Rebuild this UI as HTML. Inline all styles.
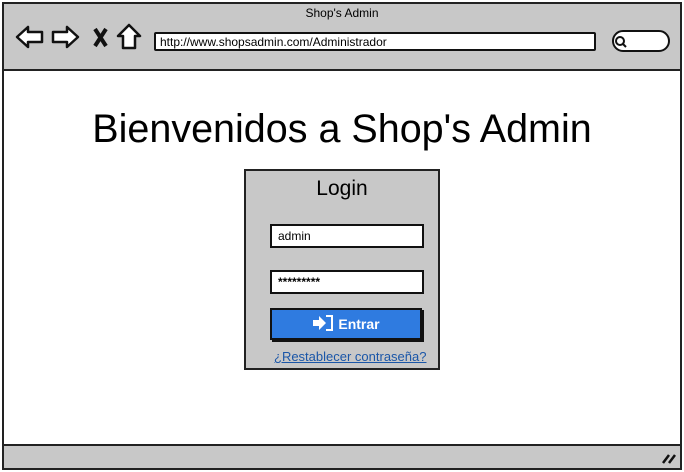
<!DOCTYPE html>
<html><head><style>
*{margin:0;padding:0;box-sizing:border-box}
body{width:684px;height:472px;background:#fff;position:relative;overflow:hidden;font-family:"Liberation Sans",sans-serif;color:#000}
.a{position:absolute}
</style></head><body>
<div class="a" style="left:2px;top:2px;width:680px;height:468px;border:2px solid #222;background:#fff"></div>
<div class="a" style="left:4px;top:4px;width:676px;height:67px;background:#c8c8c8;border-bottom:2px solid #222"></div>
<div class="a" style="left:0;top:6px;width:684px;text-align:center;font-size:12px">Shop's Admin</div>
<svg class="a" style="left:14px;top:22px" width="130" height="30" viewBox="0 0 130 30">
<path d="M3 15 L14 5 L14 10 L28 10 L28 20 L14 20 L14 25 Z" fill="#fff" stroke="#111" stroke-width="2.5" stroke-linejoin="round"/>
<path d="M64 15 L53 5 L53 10 L39 10 L39 20 L53 20 L53 25 Z" fill="#fff" stroke="#111" stroke-width="2.5" stroke-linejoin="round"/>
<path d="M81 7 L92 24 M92 7 L81 24" stroke="#111" stroke-width="4"/>
<path d="M104 14 L115 3 L126 14 L121 14 L121 26 L109 26 L109 14 Z" fill="#fff" stroke="#111" stroke-width="2.5" stroke-linejoin="round"/>
</svg>
<div class="a" style="left:154px;top:32px;width:442px;height:19px;background:#fff;border:2px solid #111;border-radius:2px;font-size:12px;padding:1px 0 0 4px">http://www.shopsadmin.com/Administrador</div>
<div class="a" style="left:612px;top:30px;width:58px;height:22px;background:#fff;border:2px solid #111;border-radius:12px"></div>
<svg class="a" style="left:614px;top:35px" width="14" height="14"><circle cx="6" cy="6" r="4" fill="none" stroke="#111" stroke-width="2"/><path d="M9 9 L12 12" stroke="#111" stroke-width="2"/></svg>
<div class="a" style="left:0;top:107px;width:684px;text-align:center;font-size:39.5px">Bienvenidos a Shop's Admin</div>
<div class="a" style="left:244px;top:169px;width:196px;height:201px;background:#c8c8c8;border:2px solid #222"></div>
<div class="a" style="left:244px;top:177px;width:196px;text-align:center;font-size:21px">Login</div>
<div class="a" style="left:270px;top:224px;width:154px;height:24px;background:#fff;border:2px solid #111;font-size:12px;padding:3px 0 0 6px">admin</div>
<div class="a" style="left:270px;top:270px;width:154px;height:24px;background:#fff;border:2px solid #111;font-size:12px;font-weight:bold;padding:3px 0 0 6px">*********</div>
<div class="a" style="left:270px;top:308px;width:152px;height:32px;background:#2f7be0;border:2px solid #111;box-shadow:2px 2px 0 #111;color:#fff;font-size:14px;font-weight:bold;text-align:center;line-height:28px"><svg width="22" height="18" style="vertical-align:-3px;margin-right:4px" viewBox="0 0 22 18"><path d="M1 6 L7 6 L7 2 L14 9 L7 16 L7 12 L1 12 Z" fill="#fff"/><path d="M14 2 L20 2 L20 16 L14 16" fill="none" stroke="#fff" stroke-width="2"/></svg>Entrar</div>
<div class="a" style="left:274px;top:349px;font-size:13px;color:#1a56a8;text-decoration:underline">¿Restablecer contraseña?</div>
<div class="a" style="left:4px;top:444px;width:676px;height:24px;background:#c8c8c8;border-top:2px solid #222"></div>
<svg class="a" style="left:661px;top:451px" width="16" height="14"><path d="M2 12 L8 4 M8 12 L14 4" stroke="#111" stroke-width="2.5"/></svg>
</body></html>
